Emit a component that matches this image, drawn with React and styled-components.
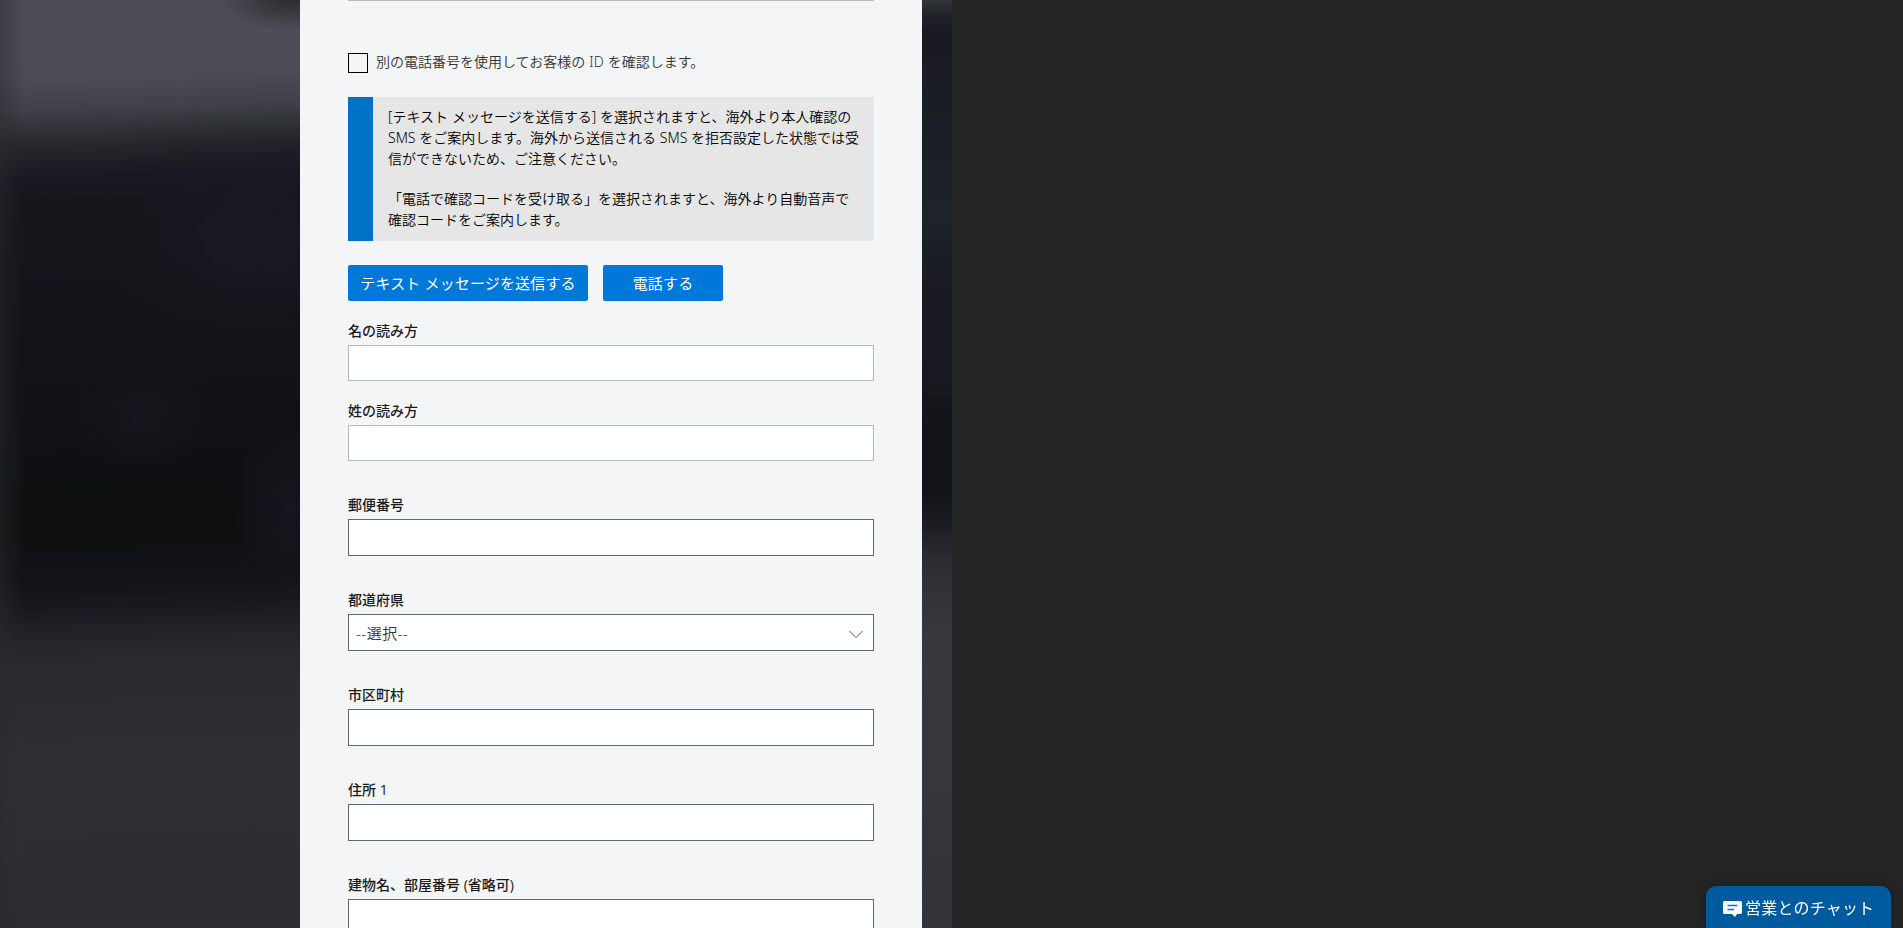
import React from 'react'
import styled, { createGlobalStyle } from 'styled-components'

const GlobalStyle = createGlobalStyle`
  * {
    box-sizing: border-box;
  }
  body {
    margin: 0;
    background: #242424;
    color: #000;
    font-family: "Noto Sans", "Noto Sans CJK JP", sans-serif;
    font-size: 14px;
    font-weight: 350;
    overflow: hidden;
  }
`

const Page = styled.div`
  display: flex;
  height: 100vh;
  overflow: hidden;
`
const LeftBackdrop = styled.div`
  width: 300px;
  background:
    radial-gradient(70px 30px at 290px 0, #2e2e32 10%, rgba(46, 46, 50, 0) 100%),
    linear-gradient(90deg, rgba(42, 42, 46, .5), rgba(42, 42, 46, 0) 24px),
    radial-gradient(60px 90px at 290px 510px, rgba(24, 25, 36, .7), rgba(24, 25, 36, 0)),
    radial-gradient(70px 50px at 140px 418px, rgba(24, 25, 34, .7), rgba(24, 25, 34, 0)),
    radial-gradient(160px 110px at 260px 240px, rgba(24, 25, 34, .8) 20%, rgba(24, 25, 34, 0)),
    linear-gradient(
      178deg,
      #4d4d58 0, #4c4c56 80px, #404049 112px, #303036 133px, #25262b 150px,
      #181922 178px, #15161b 208px, #121317 350px, #101114 440px, #0f0f11 530px,
      #121317 583px, #18181f 608px, #222226 633px, #2a2a2e 662px, #302f34 765px,
      #2d2c31 930px
    );
`
const RightBackdrop = styled.div`
  width: 30px;
  background: linear-gradient(
    #35343a 0, #22222a 14px, #181922 32px, #1b1d25 100px, #1e222b 220px,
    #181922 300px, #181920 380px, #121316 430px, #111316 490px, #1b1c22 525px,
    #2c2b30 555px, #333236 590px, #38373b 640px, #363539 800px, #333236 928px
  );
`
const Panel = styled.main`
  width: 622px;
  padding: 0 48px;
  background: #f3f5f6;
`
const PreviousField = styled.div`
  height: 1px;
  margin-bottom: 52px;
  background: #b7babb;
`
const CheckRow = styled.label`
  display: flex;
  height: 20px;
  color: #333;
  line-height: 18px;
  word-spacing: .5px;
`
const Checkbox = styled.input`
  appearance: none;
  width: 20px;
  height: 20px;
  margin: 0 8px 0 0;
  border: 1px solid #000;
`
const Notice = styled.div`
  height: 144px;
  margin-top: 24px;
  padding: 9px 0 11px 15px;
  border-left: 25px solid #0072c6;
  background: #e6e6e6;
  line-height: 21px;
  white-space: nowrap;
  word-spacing: .2px;
`
const Paragraph = styled.p`
  margin: 0 0 19px;
`
const Buttons = styled.div`
  display: flex;
  gap: 15px;
  margin: 24px 0 20px;
`
const Button = styled.button`
  width: ${p => p.$width}px;
  height: 36px;
  padding: 0 0 2px;
  border: 0;
  border-radius: 2px;
  background: #0078d9;
  color: #fff;
  font: 400 15px "Open Sans", "Noto Sans CJK JP", sans-serif;
  letter-spacing: .15px;
  white-space: nowrap;
`
const Field = styled.div`
  display: flex;
  flex-direction: column;
  margin-bottom: ${p => (p.$gap || 38)}px;
`
const Label = styled.label`
  height: 20px;
  margin-bottom: 4px;
  color: #1b1b1f;
  font-family: "Open Sans", "Noto Sans CJK JP", sans-serif;
  font-weight: 500;
  line-height: 20px;
`
const Input = styled.input`
  width: 100%;
  height: ${p => (p.$light ? 36 : 37)}px;
  padding: 0 8px;
  border: 1px solid ${p => (p.$light ? '#b7babb' : '#66686b')};
  border-radius: 0;
  background: #fff;
`
const Select = styled.div`
  display: flex;
  align-items: center;
  justify-content: space-between;
  height: 37px;
  padding: 0 10px 0 7px;
  border: 1px solid #66686b;
  background: #fff;
  color: #333;
  font-size: 15px;
  letter-spacing: .5px;
`
const ChatButton = styled.button`
  position: fixed;
  right: 12px;
  bottom: 0;
  display: flex;
  align-items: center;
  width: 185px;
  height: 42px;
  padding: 0 0 0 17px;
  border: 0;
  border-radius: 10px 10px 0 0;
  background: #005a9e;
  box-shadow: 0 0 8px rgba(0, 0, 0, .3);
  color: #fff;
  font: 400 16px "Open Sans", "Noto Sans CJK JP", sans-serif;
  letter-spacing: .2px;
  white-space: nowrap;
`
const ChatIcon = styled.svg`
  width: 19px;
  height: 16px;
  margin: 3px 3px 0 0;
`
const ChevronIcon = styled.svg`
  width: 14px;
  height: 9px;
  margin-top: 3px;
`

const Chevron = () =>
  <ChevronIcon viewBox="0 0 14 9" fill="none" stroke="#555">
    <path d="M.5 1l6.500 6.500L13.500 1" />
  </ChevronIcon>

const TextField = ({ label, light, gap }) =>
  <Field $gap={gap}>
    <Label>{label}</Label>
    <Input $light={light} />
  </Field>

const App = () =>
  <Page>
    <GlobalStyle />
    <LeftBackdrop />
    <Panel>
      <PreviousField />
      <CheckRow>
        <Checkbox type="checkbox" />
        別の電話番号を使用してお客様の ID を確認します。
      </CheckRow>
      <Notice>
        <Paragraph>
          [テキスト メッセージを送信する] を選択されますと、海外より本人確認の<br />
          SMS をご案内します。海外から送信される SMS を拒否設定した状態では受<br />
          信ができないため、ご注意ください。
        </Paragraph>
        <Paragraph>
          「電話で確認コードを受け取る」を選択されますと、海外より自動音声で<br />
          確認コードをご案内します。
        </Paragraph>
      </Notice>
      <Buttons>
        <Button $width={240}>テキスト メッセージを送信する</Button>
        <Button $width={120}>電話する</Button>
      </Buttons>
      <TextField label="名の読み方" light gap={20} />
      <TextField label="姓の読み方" light gap={34} />
      <TextField label="郵便番号" gap={34} />
      <Field $gap={34}>
        <Label>都道府県</Label>
        <Select>
          --選択--
          <Chevron />
        </Select>
      </Field>
      <TextField label="市区町村" gap={34} />
      <TextField label="住所 1" gap={34} />
      <TextField label="建物名、部屋番号 (省略可)" />
    </Panel>
    <RightBackdrop />
    <ChatButton>
      <ChatIcon viewBox="0 0 19 16">
        <path d="M1.5 0h16A1.5 1.5 0 0 1 19 1.5v10a1.5 1.5 0 0 1-1.5 1.5H14l-2 3-3-3H1.5A1.5 1.5 0 0 1 0 11.5v-10A1.5 1.5 0 0 1 1.5 0z" fill="#fff" />
        <path d="M4.5 4.5h10M4.5 8.5H11" stroke="#0078d4" strokeWidth="1.6" />
      </ChatIcon>
      営業とのチャット
    </ChatButton>
  </Page>

export default App
